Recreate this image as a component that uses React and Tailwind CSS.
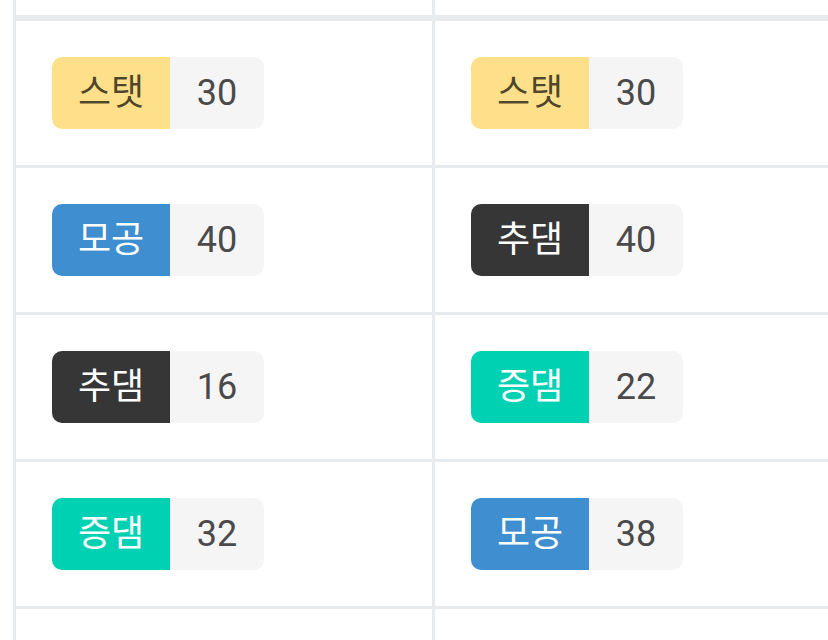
import React from 'react'

const TAGS = {
  스탯: 'bg-[#ffe08a] text-[rgba(0,0,0,0.7)]',
  모공: 'bg-[#3e8ed0] text-white',
  추댐: 'bg-[#363636] text-white',
  증댐: 'bg-[#00d1b2] text-white',
}

const rows = [
  [['스탯', 30], ['스탯', 30]],
  [['모공', 40], ['추댐', 40]],
  [['추댐', 16], ['증댐', 22]],
  [['증댐', 32], ['모공', 38]],
]

function StatTag({ name, value }) {
  return (
    <div className="flex h-[72px] rounded-[10px] overflow-hidden text-[36px] leading-none">
      <span className={`w-[118px] flex items-center justify-center ${TAGS[name]}`}>{name}</span>
      <span className="w-[94px] flex items-center justify-center bg-[#f5f5f5] text-[#4a4a4a]">{value}</span>
    </div>
  )
}

export default function App() {
  return (
    <div
      className="w-[828px] h-[640px] overflow-hidden bg-white pl-[13px]"
      style={{ fontFamily: 'Roboto, "Noto Sans CJK KR", sans-serif' }}
    >
      <div className="border-l-[3px] border-[#e8ebee] w-[1000px]">
        <div className="flex h-[21px] border-b-[6px] border-[#e8ebee]">
          <div className="w-[419px] border-r-[3px] border-[#e8ebee]" />
          <div className="flex-1" />
        </div>
        {rows.map((row, i) => (
          <div key={i} className="flex h-[147px] border-b-[3px] border-[#e8ebee]">
            <div className="w-[419px] border-r-[3px] border-[#e8ebee] pl-[36px] flex items-center">
              <StatTag name={row[0][0]} value={row[0][1]} />
            </div>
            <div className="flex-1 pl-[36px] flex items-center">
              <StatTag name={row[1][0]} value={row[1][1]} />
            </div>
          </div>
        ))}
        <div className="flex h-[60px]">
          <div className="w-[419px] border-r-[3px] border-[#e8ebee]" />
          <div className="flex-1" />
        </div>
      </div>
    </div>
  )
}
